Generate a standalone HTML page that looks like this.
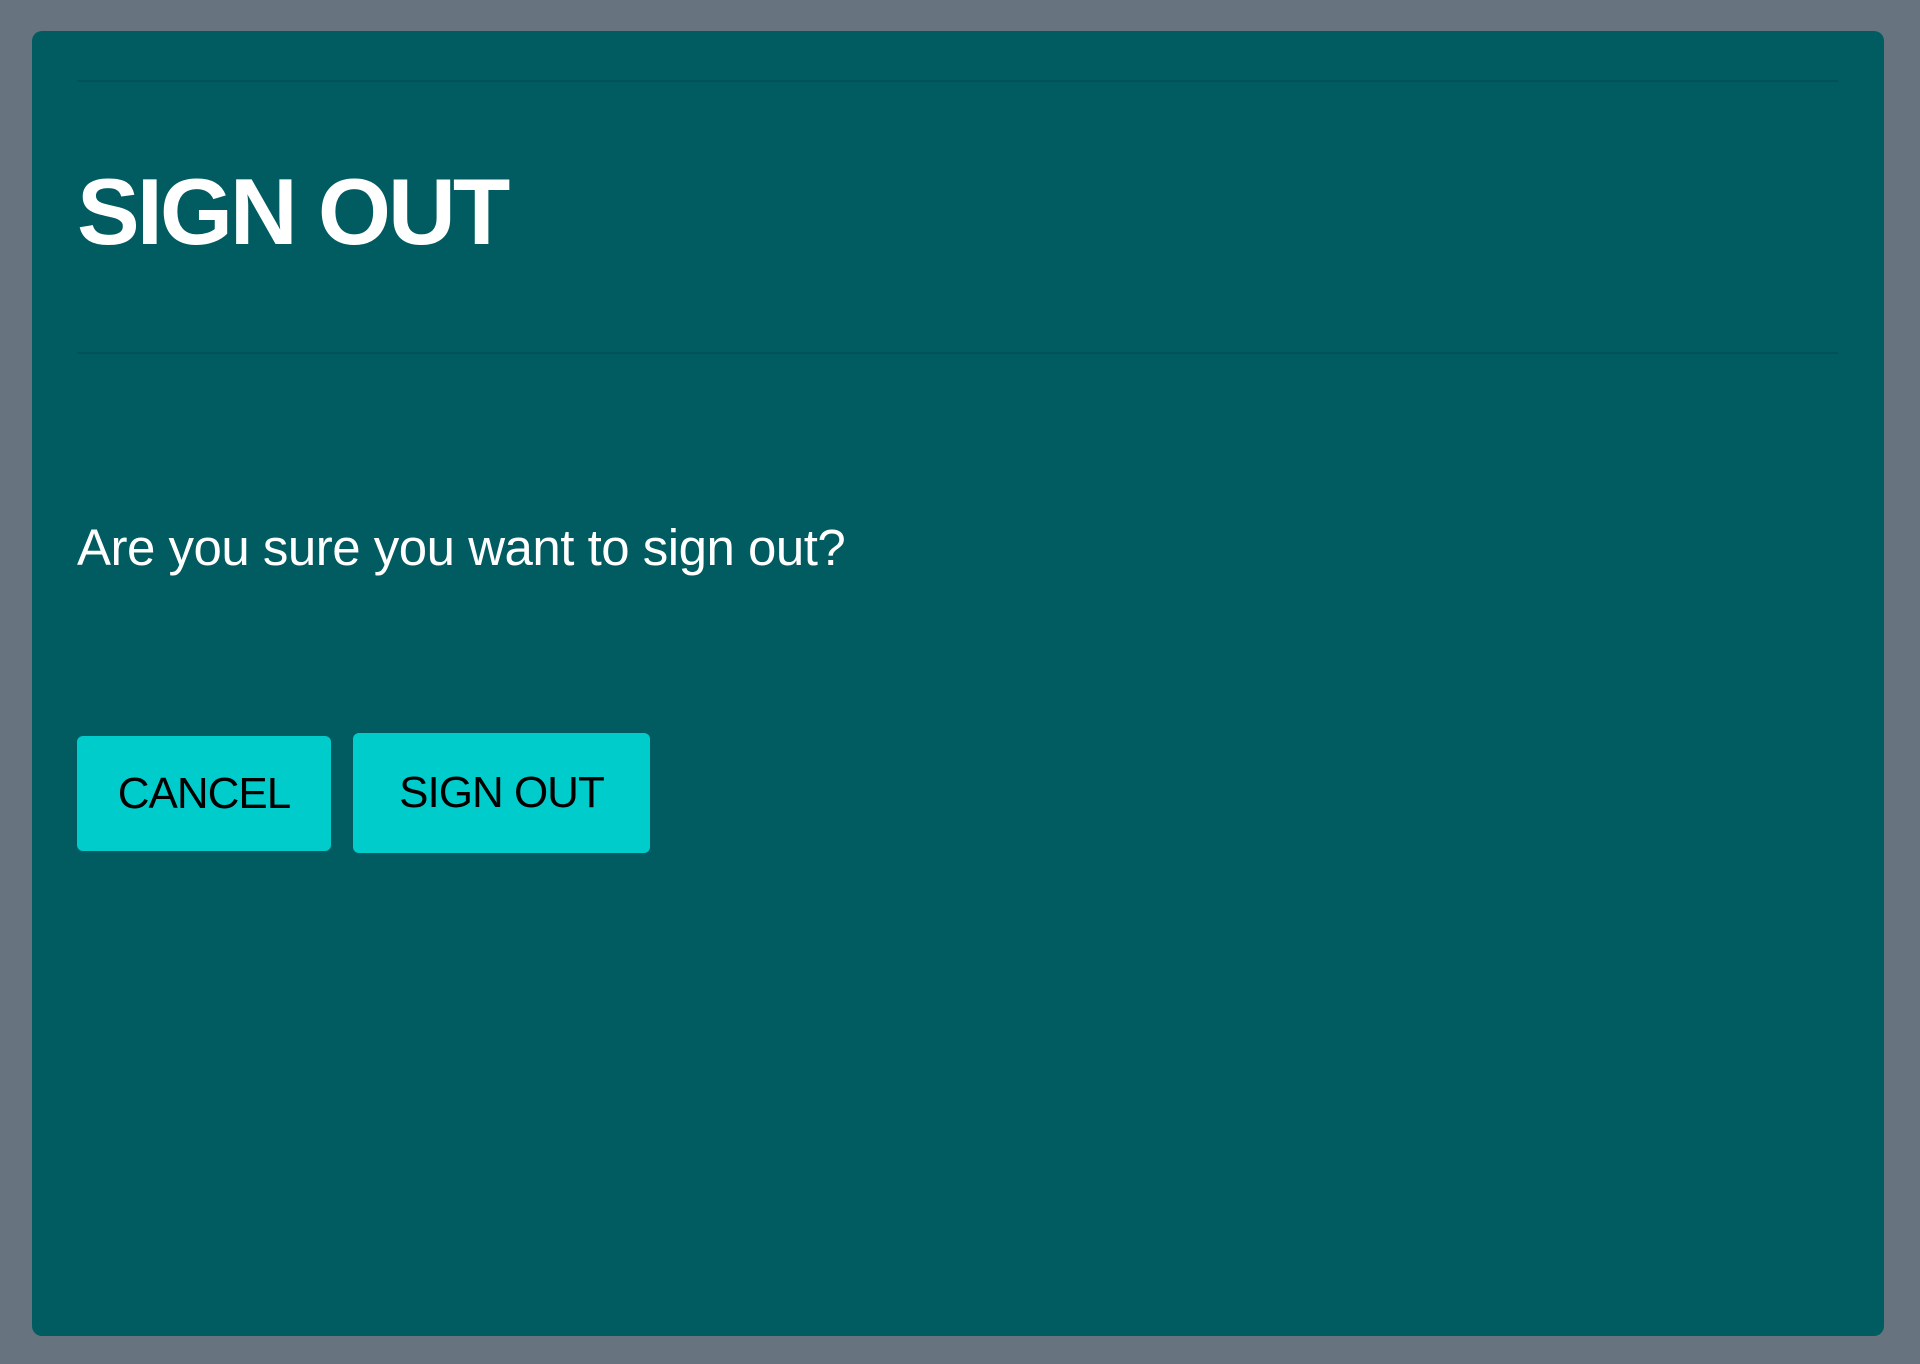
<!DOCTYPE html>
<html><head><style>
html,body{margin:0;padding:0;width:1920px;height:1364px;background:#687380;overflow:hidden}
.p{position:absolute;left:32px;top:31px;width:1852px;height:1305px;background:#005c60;border-radius:10px}
.l{position:absolute;left:45px;width:1761px;height:2px;background:#00515a}
.t{position:absolute;left:45px;top:127px;font:bold 94px "Liberation Sans",sans-serif;color:#fff;letter-spacing:-3px;white-space:nowrap}
.b{position:absolute;left:45px;top:487px;font:51px "Liberation Sans",sans-serif;color:#fff;letter-spacing:-0.5px;white-space:nowrap}
.btn{position:absolute;background:#00cccc;border-radius:6px;color:#000;font:44px "Liberation Sans",sans-serif;display:flex;align-items:center;justify-content:center;letter-spacing:-1px}
</style></head><body>
<div class="p">
<div class="l" style="top:49px"></div>
<div class="t">SIGN OUT</div>
<div class="l" style="top:321px"></div>
<div class="b">Are you sure you want to sign out?</div>
<div class="btn" style="left:45px;top:705px;width:254px;height:115px">CANCEL</div>
<div class="btn" style="left:321px;top:702px;width:297px;height:120px">SIGN OUT</div>
</div>
</body></html>
